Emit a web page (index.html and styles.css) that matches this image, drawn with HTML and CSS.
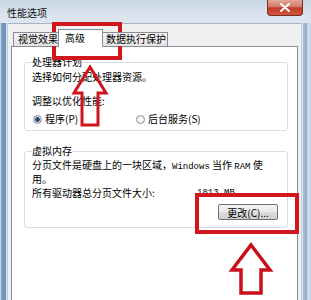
FILE: index.html
```html
<!DOCTYPE html>
<html lang="zh-CN">
<head>
<meta charset="utf-8">
<title>性能选项</title>
<link rel="stylesheet" href="styles.css">
</head>
<body>
<div class="window">
  <div class="titlebar">
    <span class="title">性能选项</span>
    <span class="close"><svg width="12" height="9" viewBox="0 0 12 9"><path d="M2 1 L10 8 M10 1 L2 8" stroke="#fff" stroke-width="2" stroke-linecap="round"/></svg></span>
  </div>
  <div class="dialog">
    <div class="tabs">
      <div class="tab tab-visual">视觉效果</div>
      <div class="tab tab-adv active">高级</div>
      <div class="tab tab-dep">数据执行保护</div>
    </div>
    <div class="panel">
      <fieldset class="group g1">
        <legend>处理器计划</legend>
        <p class="desc">选择如何分配处理器资源。</p>
        <p class="sub">调整以优化性能:</p>
        <div class="radios">
          <label class="radio"><span class="dot checked"></span>程序(P)</label>
          <label class="radio"><span class="dot"></span>后台服务(S)</label>
        </div>
      </fieldset>
      <fieldset class="group g2">
        <legend>虚拟内存</legend>
        <div class="wrap">
          <span class="line">分页文件是硬盘上的一块区域，<span class="latin">Windows</span> 当作 <span class="latin">RAM</span> 使</span>
          <span class="line line2">用。</span>
        </div>
        <div class="size"><span class="size-label">所有驱动器总分页文件大小:</span><span class="size-value">1813 MB</span></div>
        <div class="btnrow"><button class="btn">更改(C)...</button></div>
      </fieldset>
    </div>
  </div>
  <div class="mark mark-tab"></div>
  <div class="mark mark-btn"></div>
  <svg class="arrows" width="311" height="300" viewBox="0 0 311 300">
    <polygon points="90,67 106,93 98,93 98,125 82,125 82,93 74,93" fill="none" stroke="#d0141d" stroke-width="3" stroke-linejoin="miter"/>
    <polygon points="251,245 270,270 261,270 261,293 241,293 241,270 232,270" fill="none" stroke="#c8101a" stroke-width="3.5" stroke-linejoin="miter"/>
  </svg>
</div>
</body>
</html>
```

FILE: styles.css
```css
html, body {
  margin: 0;
  padding: 0;
}
body {
  width: 311px;
  height: 300px;
  overflow: hidden;
  font-family: "Noto Sans CJK SC", "Liberation Sans", sans-serif;
  font-size: 10px;
  color: #000;
}
.window {
  position: relative;
  width: 311px;
  height: 300px;
  box-sizing: border-box;
  padding: 0 9px 0 7px;
  display: flex;
  flex-direction: column;
  background: linear-gradient(to right, #c9d6e3 0, #c9d6e3 1px, #7c9ec4 1px, #6f93bd 6px, #dbe4ee 6px, #dbe4ee calc(100% - 8px), #a9bfd6 calc(100% - 8px), #8fabc9 calc(100% - 4px), #cdd9e6 calc(100% - 4px));
}
.titlebar {
  height: 23px;
  margin: 0 -9px 0 -7px;
  padding: 0 8px 0 7px;
  display: flex;
  justify-content: space-between;
  align-items: flex-start;
  background: linear-gradient(to bottom, #c9d6e4, #d9e3ed 60%, #dde6ef);
}
.title {
  line-height: 12px;
  padding-top: 7px;
  color: #111;
}
.close {
  width: 36px;
  height: 16px;
  box-sizing: border-box;
  border: 1px solid #7a2b22;
  border-top: none;
  border-radius: 0 0 4px 4px;
  display: flex;
  align-items: center;
  justify-content: center;
  background: linear-gradient(to bottom, #e4a89c 0, #d47a6a 45%, #bf3b28 52%, #d5563c 100%);
}
.dialog {
  flex: 1;
  display: flex;
  flex-direction: column;
  background: #f0f0f0;
  border-top: 1px solid #a5b4c4;
  border-left: 1px solid #c4ced9;
  border-right: 1px solid #c4ced9;
  padding: 5px 3px 0 3px;
}
.tabs {
  display: flex;
  align-items: flex-end;
  height: 18px;
  margin: 0 0 -1px 2px;
  position: relative;
  z-index: 1;
}
.tab {
  box-sizing: border-box;
  height: 14px;
  margin-bottom: 1px;
  border: 1px solid #898c95;
  border-bottom: none;
  background: linear-gradient(to bottom, #f4f4f4, #e4e4e4);
  line-height: 12px;
  white-space: nowrap;
}
.tab-visual {
  width: 46px;
  padding-left: 4px;
}
.tab-adv {
  width: 45px;
  margin-left: -1px;
  padding-left: 6px;
}
.tab-dep {
  width: 66px;
  margin-left: -1px;
  padding-left: 3px;
}
.tab.active {
  height: 18px;
  margin-bottom: 0;
  background: #fff;
  line-height: 15px;
  position: relative;
  z-index: 2;
}
.panel {
  flex: 1;
  background: #fff;
  border: 1px solid #898c95;
  border-bottom: none;
  padding: 0 9px 0 12px;
}
.group {
  margin: 10px 0 0;
  padding: 0 7px 5px;
  border: 1px solid #d5dfe5;
  border-radius: 3px;
  min-width: 0;
}
.group legend {
  padding: 0;
  line-height: 10px;
}
.g2 {
  margin-top: 15px;
  padding-bottom: 7px;
}
.desc {
  margin: 4px 0 0;
  line-height: 12px;
}
.sub {
  margin: 12px 0 0;
  line-height: 12px;
}
.radios {
  margin-top: 6px;
  padding-left: 1px;
  display: grid;
  grid-template-columns: 103px auto;
  line-height: 12px;
}
.radio {
  display: flex;
  align-items: center;
  white-space: nowrap;
}
.dot {
  width: 9px;
  height: 9px;
  box-sizing: border-box;
  border: 1px solid #8e9296;
  border-radius: 50%;
  margin-right: 3px;
  background: radial-gradient(circle, #ffffff 0, #e6e6e6 100%);
}
.dot.checked {
  background: radial-gradient(circle, #243f5e 0, #2d5078 2px, #c9d5e2 2.6px, #f2f2f2 100%);
}
.wrap {
  margin: 3px 0 0;
  display: flex;
  flex-direction: column;
}
.line {
  display: block;
  line-height: 12px;
  white-space: nowrap;
}
.latin {
  font-family: "Liberation Mono", "DejaVu Sans Mono", monospace;
  font-size: 9px;
}
.size {
  margin-top: 2px;
  display: grid;
  grid-template-columns: 165px auto;
  line-height: 12px;
}
.size-value {
  font-family: "Liberation Mono", "DejaVu Sans Mono", monospace;
  font-size: 9px;
}
.btnrow {
  margin-top: 5px;
  display: flex;
  justify-content: flex-end;
}
.btn {
  width: 60px;
  height: 16px;
  margin-right: 2px;
  padding: 0;
  border: 1px solid #707070;
  border-radius: 2px;
  background: linear-gradient(to bottom, #f3f3f3 0, #ebebeb 50%, #dddddd 51%, #cfcfcf 100%);
  font-family: "Noto Sans CJK SC", "Liberation Sans", sans-serif;
  font-size: 10px;
  line-height: 13px;
  color: #000;
}
.mark {
  position: absolute;
  box-sizing: border-box;
  border: 4px solid #d2161e;
}
.mark-tab {
  left: 52px;
  top: 22px;
  width: 70px;
  height: 38px;
}
.mark-btn {
  left: 195px;
  top: 193px;
  width: 104px;
  height: 41px;
}
.arrows {
  position: absolute;
  left: 0;
  top: 0;
  pointer-events: none;
}
```
